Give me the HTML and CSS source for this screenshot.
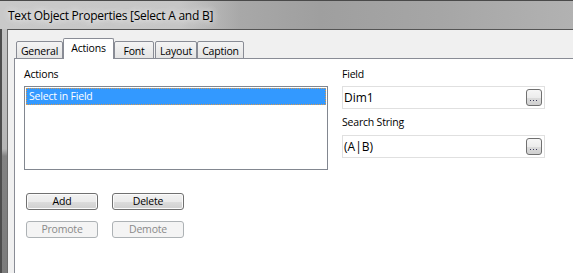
FILE: index.html
```html
<!DOCTYPE html>
<html lang="en">
<head>
    <meta charset="UTF-8">
    <title>Text Object Properties</title>
    <link rel="stylesheet" href="styles.css">
</head>
<body>
    <div class="window">
        <div class="titlebar">
            <span class="title">Text Object Properties [Select A and B]</span>
        </div>
        <div class="frame">
            <div class="frame-edge"></div>
            <div class="client">
                <div class="tabs">
                    <div class="tab tab-general">General</div>
                    <div class="tab tab-actions active">Actions</div>
                    <div class="tab tab-font">Font</div>
                    <div class="tab tab-layout">Layout</div>
                    <div class="tab tab-caption">Caption</div>
                </div>
                <div class="panel">
                    <div class="columns">
                        <div class="col-left">
                            <div class="label">Actions</div>
                            <div class="listbox">
                                <div class="list-item selected">Select in Field</div>
                            </div>
                            <div class="button-grid">
                                <button class="btn">Add</button>
                                <button class="btn">Delete</button>
                                <button class="btn" disabled>Promote</button>
                                <button class="btn" disabled>Demote</button>
                            </div>
                        </div>
                        <div class="col-right">
                            <div class="label">Field</div>
                            <div class="field">
                                <span class="field-text">Dim1</span>
                                <button class="browse">
                                    <svg width="14" height="15" viewBox="0 0 14 15">
                                        <rect x="3" y="10" width="1" height="1" fill="#3a3a5a"/>
                                        <rect x="6" y="10" width="1" height="1" fill="#3a3a5a"/>
                                        <rect x="9" y="10" width="1" height="1" fill="#3a3a5a"/>
                                    </svg>
                                </button>
                            </div>
                            <div class="label label-gap">Search String</div>
                            <div class="field">
                                <span class="field-text">(A|B)</span>
                                <button class="browse">
                                    <svg width="14" height="15" viewBox="0 0 14 15">
                                        <rect x="3" y="10" width="1" height="1" fill="#3a3a5a"/>
                                        <rect x="6" y="10" width="1" height="1" fill="#3a3a5a"/>
                                        <rect x="9" y="10" width="1" height="1" fill="#3a3a5a"/>
                                    </svg>
                                </button>
                            </div>
                        </div>
                    </div>
                </div>
            </div>
        </div>
    </div>
</body>
</html>
```

FILE: styles.css
```css
html, body {
    margin: 0;
    padding: 0;
    width: 573px;
    height: 273px;
    overflow: hidden;
}
body {
    font-family: "Open Sans", "Liberation Sans", sans-serif;
    font-size: 10.5px;
    letter-spacing: -0.2px;
    color: #000;
}
.window {
    display: flex;
    flex-direction: column;
    height: 273px;
}
.titlebar {
    box-sizing: border-box;
    height: 29px;
    border-top: 1px solid #4a4a4a;
    padding: 7px 0 0 8px;
    background: linear-gradient(90deg, #c9c9c9 0, #c6c6c6 180px, #a8a8a8 240px, #9f9f9f 320px, #a6a6a6 440px, #b2b2b2 573px);
}
.title {
    font-size: 12px;
    line-height: 15px;
    letter-spacing: -0.25px;
    text-shadow: 0 0 6px rgba(255, 255, 255, 0.9), 0 0 12px rgba(255, 255, 255, 0.7);
}
.frame {
    flex: 1;
    display: flex;
}
.frame-edge {
    box-sizing: border-box;
    width: 7px;
    border-left: 2px solid #4d4d4d;
    background: linear-gradient(to bottom, #c2c2c2 0, #b6b6b6 120px, #828282 127px, #7c7c7c 100%);
}
.client {
    flex: 1;
    display: flex;
    flex-direction: column;
    background-color: #f0f0f0;
    border-top: 1px solid #555;
    border-left: 1px solid #6b6b6b;
    padding: 8px 0 0 6px;
}
.tabs {
    display: flex;
    align-items: flex-end;
    height: 21px;
    margin-left: 2px;
    margin-bottom: -1px;
    position: relative;
    z-index: 1;
}
.tab {
    box-sizing: border-box;
    height: 18px;
    border: 1px solid #898c95;
    border-radius: 2px 2px 0 0;
    background: linear-gradient(to bottom, #f4f4f4, #e4e4e4);
    text-align: center;
    padding-top: 2px;
    line-height: 14px;
}
.tab.active {
    height: 21px;
    border-bottom: none;
    background: #fff;
}
.tab-general { width: 47px; }
.tab-actions { width: 51px; }
.tab-font { width: 40px; }
.tab-layout { width: 42px; margin-left: 1px; }
.tab-caption { width: 47px; }
.panel {
    flex: 1;
    background-color: #fff;
    border-top: 1px solid #898c95;
    border-left: 1px solid #898c95;
    padding: 8px 0 0 9px;
}
.columns {
    display: flex;
    gap: 14px;
}
.col-left {
    width: 304px;
}
.col-right {
    width: 203px;
}
.label {
    line-height: 14px;
}
.label-gap {
    margin-top: 6px;
}
.listbox {
    box-sizing: border-box;
    margin-top: 5px;
    height: 84px;
    border: 1px solid #828790;
    padding: 1px;
}
.list-item {
    box-sizing: border-box;
    height: 17px;
    padding-left: 2px;
    line-height: 15px;
}
.list-item.selected {
    background-color: #3399ff;
    color: #fff;
    border: 1px dotted #d99a50;
}
.button-grid {
    display: grid;
    grid-template-columns: 72px 72px;
    column-gap: 14px;
    row-gap: 11px;
    margin-top: 23px;
    padding-left: 2px;
}
.btn {
    box-sizing: border-box;
    height: 17px;
    padding: 0;
    border: 1px solid #707070;
    border-radius: 3px;
    background: linear-gradient(to bottom, #f2f2f2 0%, #ebebeb 50%, #dddddd 50%, #cfcfcf 100%);
    box-shadow: inset 0 0 0 1px #fbfbfb;
    font-family: inherit;
    font-size: 10.5px;
    line-height: 15px;
    letter-spacing: -0.2px;
    color: #000;
}
.btn:disabled {
    border-color: #adb2b5;
    background: #f4f4f4;
    box-shadow: none;
    color: #8a8a8a;
}
.field {
    box-sizing: border-box;
    display: flex;
    align-items: center;
    justify-content: space-between;
    height: 23px;
    margin-top: 5px;
    border: 1px solid #e0e0e0;
    padding: 0 2px 0 1px;
}
.label-gap + .field {
    margin-top: 6px;
}
.field-text {
    font-size: 12px;
    letter-spacing: 0;
}
.browse {
    box-sizing: border-box;
    width: 16px;
    height: 17px;
    padding: 0;
    border: 1px solid #707070;
    border-radius: 3px;
    background: linear-gradient(to bottom, #f6f6f6 0%, #ececec 50%, #dcdcdc 50%, #d0d0d0 100%);
    display: flex;
}
```
